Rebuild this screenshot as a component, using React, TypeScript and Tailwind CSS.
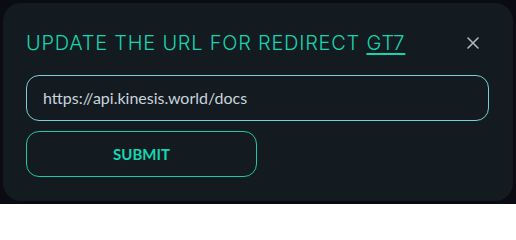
import React from "react";

export default function App() {
  return (
    <div className="w-[516px] h-[204px] bg-[#0b0b14] pl-[3px] pt-[3px]">
      <div className="w-[510px] h-[198px] rounded-[18px] bg-[#131b21] pl-[23px] pr-[24px] pt-[25px]">
        <div className="flex items-center justify-between h-[30px]">
          <h2
            className="text-[20px] leading-[30px] font-light text-[#17d4b0] tracking-[0.75px]"
            style={{ fontFamily: "Inter, 'Liberation Sans', sans-serif" }}
          >
            UPDATE THE URL FOR REDIRECT <span className="underline underline-offset-[3px] decoration-[2px]">GT7</span>
          </h2>
          <button className="w-[20px] h-[20px] flex items-center justify-center text-[#aeb8c2] mr-[6px]">
            <svg width="12" height="12" viewBox="0 0 12 12" fill="none" stroke="currentColor" strokeWidth="1.6" strokeLinecap="round">
              <path d="M1 1L11 11M11 1L1 11" />
            </svg>
          </button>
        </div>
        <div className="mt-[17px] h-[46px] rounded-[13px] border-[1.5px] border-[#78cfd5] flex items-center pl-[16px]">
          <span
            className="text-[16px] text-[#c9d4dd]"
            style={{ fontFamily: "Lato, sans-serif" }}
          >
            https://api.kinesis.world/docs
          </span>
        </div>
        <button
          className="mt-[10px] w-[231px] h-[46px] rounded-[13px] border-[1.5px] border-[#1cc9a6] flex items-center justify-center text-[15px] font-bold text-[#17d4b0]"
          style={{ fontFamily: "Lato, sans-serif" }}
        >
          SUBMIT
        </button>
      </div>
    </div>
  );
}
